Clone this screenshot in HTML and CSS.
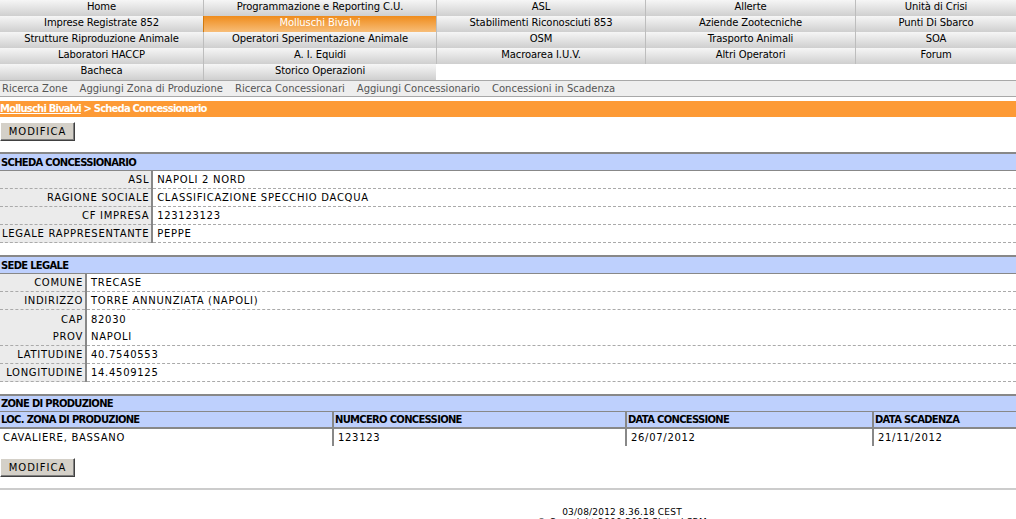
FILE: index.html
```html
<!DOCTYPE html>
<html>
<head>
<meta charset="utf-8">
<link rel="stylesheet" href="styles.css">
</head>
<body>
<nav class="menu">
  <a class="mi">Home</a><a class="mi">Programmazione e Reporting C.U.</a><a class="mi">ASL</a><a class="mi">Allerte</a><a class="mi">Unità di Crisi</a>
  <a class="mi">Imprese Registrate 852</a><a class="mi active">Molluschi Bivalvi</a><a class="mi">Stabilimenti Riconosciuti 853</a><a class="mi">Aziende Zootecniche</a><a class="mi">Punti Di Sbarco</a>
  <a class="mi">Strutture Riproduzione Animale</a><a class="mi">Operatori Sperimentazione Animale</a><a class="mi">OSM</a><a class="mi">Trasporto Animali</a><a class="mi">SOA</a>
  <a class="mi">Laboratori HACCP</a><a class="mi">A. I. Equidi</a><a class="mi">Macroarea I.U.V.</a><a class="mi">Altri Operatori</a><a class="mi">Forum</a>
  <a class="mi">Bacheca</a><a class="mi">Storico Operazioni</a>
</nav>
<div class="submenu">
  <a>Ricerca Zone</a><a>Aggiungi Zona di Produzione</a><a>Ricerca Concessionari</a><a>Aggiungi Concessionario</a><a>Concessioni in Scadenza</a>
</div>
<div class="crumb"><a class="crumb-link">Molluschi Bivalvi</a> &gt; Scheda Concessionario</div>
<div class="btnrow"><button class="btn">MODIFICA</button></div>

<table class="detail d1">
  <tr><th colspan="2" class="sect">SCHEDA CONCESSIONARIO</th></tr>
  <tr><td class="lbl">ASL</td><td>NAPOLI 2 NORD</td></tr>
  <tr><td class="lbl">RAGIONE SOCIALE</td><td>CLASSIFICAZIONE SPECCHIO DACQUA</td></tr>
  <tr><td class="lbl">CF IMPRESA</td><td>123123123</td></tr>
  <tr><td class="lbl">LEGALE RAPPRESENTANTE</td><td>PEPPE</td></tr>
</table>

<table class="detail d2">
  <tr><th colspan="2" class="sect">SEDE LEGALE</th></tr>
  <tr><td class="lbl">COMUNE</td><td>TRECASE</td></tr>
  <tr><td class="lbl">INDIRIZZO</td><td>TORRE ANNUNZIATA (NAPOLI)</td></tr>
  <tr class="nob tall"><td class="lbl">CAP</td><td>82030</td></tr>
  <tr><td class="lbl">PROV</td><td>NAPOLI</td></tr>
  <tr><td class="lbl">LATITUDINE</td><td>40.7540553</td></tr>
  <tr><td class="lbl">LONGITUDINE</td><td>14.4509125</td></tr>
</table>

<table class="zone">
  <tr><th colspan="4" class="sect zsect">ZONE DI PRODUZIONE</th></tr>
  <tr class="zh"><th class="c1">LOC. ZONA DI PRODUZIONE</th><th class="c2">NUMCERO CONCESSIONE</th><th class="c3">DATA CONCESSIONE</th><th class="c4">DATA SCADENZA</th></tr>
  <tr class="zd"><td>CAVALIERE, BASSANO</td><td>123123</td><td>26/07/2012</td><td>21/11/2012</td></tr>
</table>
<div class="btnrow b2"><button class="btn">MODIFICA</button></div>
<hr class="sep">
<footer class="foot">
  <div>03/08/2012 8.36.18 CEST</div>
  <div>© Copyright 2000-2007 Sintesi SRM</div>
</footer>
</body>
</html>
```

FILE: styles.css
```css
html, body { margin: 0; padding: 0; background: #fff; }
body { font-family: "DejaVu Sans", Verdana, sans-serif; font-size: 10px; color: #000; overflow: hidden; }

.menu {
  display: grid;
  grid-template-columns: 203px 233px 209px 210px 1fr;
  grid-auto-rows: 16px;
}
.mi {
  display: flex; align-items: center; justify-content: center;
  background: linear-gradient(#f6f6f6, #cfcfcf);
  border-left: 1px solid #bdbdbd;
  color: #000; white-space: nowrap; line-height: 12px; padding-bottom: 2px; box-sizing: border-box;
  letter-spacing: -0.1px;
}
.mi:nth-child(5n+1) { border-left: none; }
.mi.active { background: linear-gradient(#ef8c1c, #f7bd78); color: #fff; border-left-color: #d07a10; }

.submenu {
  display: flex; height: 15px; align-items: center;
  background: #eeeeee; border-top: 1px solid #a8a8a8; border-bottom: 1px solid #a8a8a8;
  padding-left: 2px; gap: 12px; color: #555;
}
.crumb {
  margin-top: 4px; height: 16px; line-height: 16px;
  background: #fd9a35; color: #fff; font-weight: bold; letter-spacing: -0.8px;
}
.crumb-link { text-decoration: underline; }

.btnrow { padding: 5px 0 11px 0; }
.btn {
  font-family: "DejaVu Sans", Verdana, sans-serif; font-size: 10px; letter-spacing: 1px;
  width: 75px; height: 19px; padding: 0;
  background: #d4d0c8; color: #000;
  border: 1px solid; border-color: #fff #404040 #404040 #fff;
  box-shadow: inset -1px -1px 0 #808080;
}

table { border-collapse: collapse; width: 100%; }
th, td { padding: 0 0 0 2px; text-align: left; white-space: nowrap; }
td { letter-spacing: 0.7px; }
.sect {
  background: #bed0fd; font-weight: bold; letter-spacing: -0.7px;
  border-top: 2px solid #888; border-bottom: 1px solid #888;
  height: 16px; line-height: 15px; padding-left: 1px;
}
.zone .zsect { height: 15px; line-height: 15px; }
.detail td { height: 17px; border-bottom: 1px dashed #aaa; padding-left: 4px; }
.detail tr.tall td { height: 18px; }
.detail td.lbl { background: #ebebeb; text-align: right; border-right: 2px solid #888; padding: 0 2px 0 2px; }
.d1 td.lbl { width: 146px; }
.d2 td.lbl { width: 81px; }
.detail tr.nob td { border-bottom: none; }
.d1 { margin-bottom: 12px; }
.d2 { margin-bottom: 12px; }

.zone .zh th {
  background: #bed0fd; font-weight: bold; letter-spacing: -0.7px;
  border-bottom: 2px solid #888; height: 15px; line-height: 15px; padding-left: 1px;
}
.zone .zh th + th, .zone .zd td + td { border-left: 2px solid #888; }
.zone .c1 { width: 331px; }
.zone .c2 { width: 290px; }
.zone .c3 { width: 244px; }
.zone .zd td { height: 17px; padding-left: 4px; }
.zone .zd td:first-child { padding-left: 3px; }

.b2 { padding-top: 12px; padding-bottom: 11px; }
.sep { margin: 0; border: none; border-top: 2px solid #cccccc; }
.foot { padding: 17px 0 0 422px; width: 400px; text-align: center; line-height: 10px; font-size: 9px; letter-spacing: 0.2px; }
```
